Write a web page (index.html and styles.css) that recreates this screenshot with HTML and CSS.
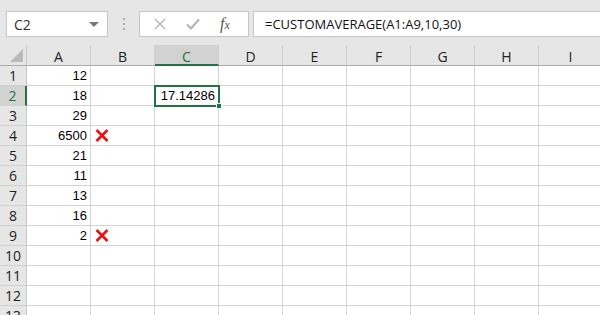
FILE: index.html
```html
<!DOCTYPE html>
<html>
<head>
<meta charset="utf-8">
<link rel="stylesheet" href="styles.css">
</head>
<body>
<div class="toolbar">
  <div class="namebox"><span class="nb-text">C2</span><span class="nb-arrow"></span></div>
  <div class="dots"><i></i><i></i><i></i></div>
  <div class="fbuttons">
    <svg class="ic-x" width="14" height="14" viewBox="0 0 14 14"><path d="M2 2L12 12M12 2L2 12" stroke="#b4b4b4" stroke-width="1.4" fill="none"/></svg>
    <svg class="ic-check" width="16" height="14" viewBox="0 0 16 14"><path d="M2 7.5L6 11.5L14 2.5" stroke="#b4b4b4" stroke-width="2.2" fill="none"/></svg>
    <span class="fx"><i>f</i><small>x</small></span>
  </div>
  <div class="formula">=CUSTOMAVERAGE(A1:A9,10,30)</div>
</div>
<div class="sheet">
  <div class="corner"><span class="tri"></span></div>
  <div class="ch">A</div><div class="ch">B</div><div class="ch sel">C</div><div class="ch">D</div><div class="ch">E</div><div class="ch">F</div><div class="ch">G</div><div class="ch">H</div><div class="ch">I</div>

  <div class="rh">1</div><div class="c num">12</div><div class="c"></div><div class="c"></div><div class="c"></div><div class="c"></div><div class="c"></div><div class="c"></div><div class="c"></div><div class="c"></div>
  <div class="rh sel">2</div><div class="c num">18</div><div class="c"></div><div class="c num active">17.14286<span class="handle"></span></div><div class="c"></div><div class="c"></div><div class="c"></div><div class="c"></div><div class="c"></div><div class="c"></div>
  <div class="rh">3</div><div class="c num">29</div><div class="c"></div><div class="c"></div><div class="c"></div><div class="c"></div><div class="c"></div><div class="c"></div><div class="c"></div><div class="c"></div>
  <div class="rh">4</div><div class="c num">6500</div><div class="c mark"><svg width="14" height="13" viewBox="0 0 14 13"><path d="M1.5 1L12.5 12M12.5 1L1.5 12" stroke="#ee1111" stroke-width="2.6" fill="none"/></svg></div><div class="c"></div><div class="c"></div><div class="c"></div><div class="c"></div><div class="c"></div><div class="c"></div><div class="c"></div>
  <div class="rh">5</div><div class="c num">21</div><div class="c"></div><div class="c"></div><div class="c"></div><div class="c"></div><div class="c"></div><div class="c"></div><div class="c"></div><div class="c"></div>
  <div class="rh">6</div><div class="c num">11</div><div class="c"></div><div class="c"></div><div class="c"></div><div class="c"></div><div class="c"></div><div class="c"></div><div class="c"></div><div class="c"></div>
  <div class="rh">7</div><div class="c num">13</div><div class="c"></div><div class="c"></div><div class="c"></div><div class="c"></div><div class="c"></div><div class="c"></div><div class="c"></div><div class="c"></div>
  <div class="rh">8</div><div class="c num">16</div><div class="c"></div><div class="c"></div><div class="c"></div><div class="c"></div><div class="c"></div><div class="c"></div><div class="c"></div><div class="c"></div>
  <div class="rh">9</div><div class="c num">2</div><div class="c mark"><svg width="14" height="13" viewBox="0 0 14 13"><path d="M1.5 1L12.5 12M12.5 1L1.5 12" stroke="#ee1111" stroke-width="2.6" fill="none"/></svg></div><div class="c"></div><div class="c"></div><div class="c"></div><div class="c"></div><div class="c"></div><div class="c"></div><div class="c"></div>
  <div class="rh">10</div><div class="c"></div><div class="c"></div><div class="c"></div><div class="c"></div><div class="c"></div><div class="c"></div><div class="c"></div><div class="c"></div><div class="c"></div>
  <div class="rh">11</div><div class="c"></div><div class="c"></div><div class="c"></div><div class="c"></div><div class="c"></div><div class="c"></div><div class="c"></div><div class="c"></div><div class="c"></div>
  <div class="rh">12</div><div class="c"></div><div class="c"></div><div class="c"></div><div class="c"></div><div class="c"></div><div class="c"></div><div class="c"></div><div class="c"></div><div class="c"></div>
  <div class="rh">13</div><div class="c"></div><div class="c"></div><div class="c"></div><div class="c"></div><div class="c"></div><div class="c"></div><div class="c"></div><div class="c"></div><div class="c"></div>
</div>
</body>
</html>
```
FILE: styles.css
```css
* { box-sizing: border-box; }
html, body { margin: 0; padding: 0; }
body {
  width: 600px;
  height: 315px;
  overflow: hidden;
  background: #e6e6e6;
  font-family: "Open Sans", "Liberation Sans", sans-serif;
  color: #222;
}
.toolbar {
  height: 45px;
  padding: 11px 0 0 6px;
  display: flex;
  align-items: flex-start;
}
.namebox {
  width: 102px;
  height: 26px;
  background: #fff;
  border: 1px solid #c6c6c6;
  display: flex;
  align-items: center;
  justify-content: space-between;
  padding: 0 8px 0 7px;
  font-size: 14px;
  color: #333;
}
.nb-arrow {
  width: 0; height: 0;
  border-left: 5px solid transparent;
  border-right: 5px solid transparent;
  border-top: 5px solid #777;
}
.dots {
  width: 31px;
  height: 26px;
  display: flex;
  flex-direction: column;
  align-items: center;
  justify-content: center;
  gap: 3px;
}
.dots i { width: 2px; height: 2px; background: #b0b0b0; display: block; }
.fbuttons {
  width: 110px;
  height: 26px;
  background: #fff;
  border: 1px solid #c6c6c6;
  display: flex;
  align-items: center;
  padding-left: 13px;
}
.ic-x { margin-right: 18px; }
.ic-check { margin-right: 19px; }
.fx {
  font-family: "Liberation Serif", serif;
  font-size: 16px;
  color: #555;
  font-style: italic;
}
.fx i { font-style: italic; }
.fx small { font-size: 12px; }
.formula {
  margin-left: 4px;
  flex: 1;
  height: 26px;
  background: #fff;
  border: 1px solid #c6c6c6;
  border-right: none;
  padding-left: 11px;
  font-size: 13px;
  line-height: 24px;
  color: #111;
  white-space: nowrap;
}
.sheet {
  display: grid;
  grid-template-columns: 27px repeat(9, 64px);
  grid-template-rows: 21px repeat(13, 20px);
  background: #fff;
}
.corner {
  background: #e6e6e6;
  border-right: 1px solid #c6c6c6;
  border-bottom: 1px solid #ababab;
  position: relative;
}
.tri {
  position: absolute;
  right: 3px;
  bottom: 3px;
  width: 0; height: 0;
  border-left: 13px solid transparent;
  border-bottom: 13px solid #b9b9b9;
}
.ch {
  background: #e6e6e6;
  border-right: 1px solid #cfcfcf;
  border-bottom: 1px solid #ababab;
  text-align: center;
  font-size: 14px;
  line-height: 20px;
  color: #222;
  padding-top: 2px;
}
.ch.sel {
  background: #d2d2d2;
  color: #217346;
  border-bottom: 2px solid #217346;
}
.rh {
  background: #e6e6e6;
  border-right: 1px solid #c6c6c6;
  border-bottom: 1px solid #d0d0d0;
  text-align: center;
  font-size: 14px;
  line-height: 19px;
  color: #222;
}
.rh.sel {
  background: #d2d2d2;
  color: #217346;
  border-right: 2px solid #217346;
}
.c {
  border-right: 1px solid #d4d4d4;
  border-bottom: 1px solid #d4d4d4;
  font-family: "Liberation Sans", sans-serif;
  font-size: 13px;
  line-height: 20px;
  color: #000;
  position: relative;
}
.num { text-align: right; padding-right: 3px; }
.mark { padding: 3px 0 0 4px; }
.mark svg { display: block; }
.active {
  outline: 2px solid #217346;
  outline-offset: -1px;
  z-index: 1;
}
.handle {
  position: absolute;
  right: -4px;
  bottom: -4px;
  width: 6px;
  height: 6px;
  background: #217346;
  border: 1px solid #fff;
}
```
